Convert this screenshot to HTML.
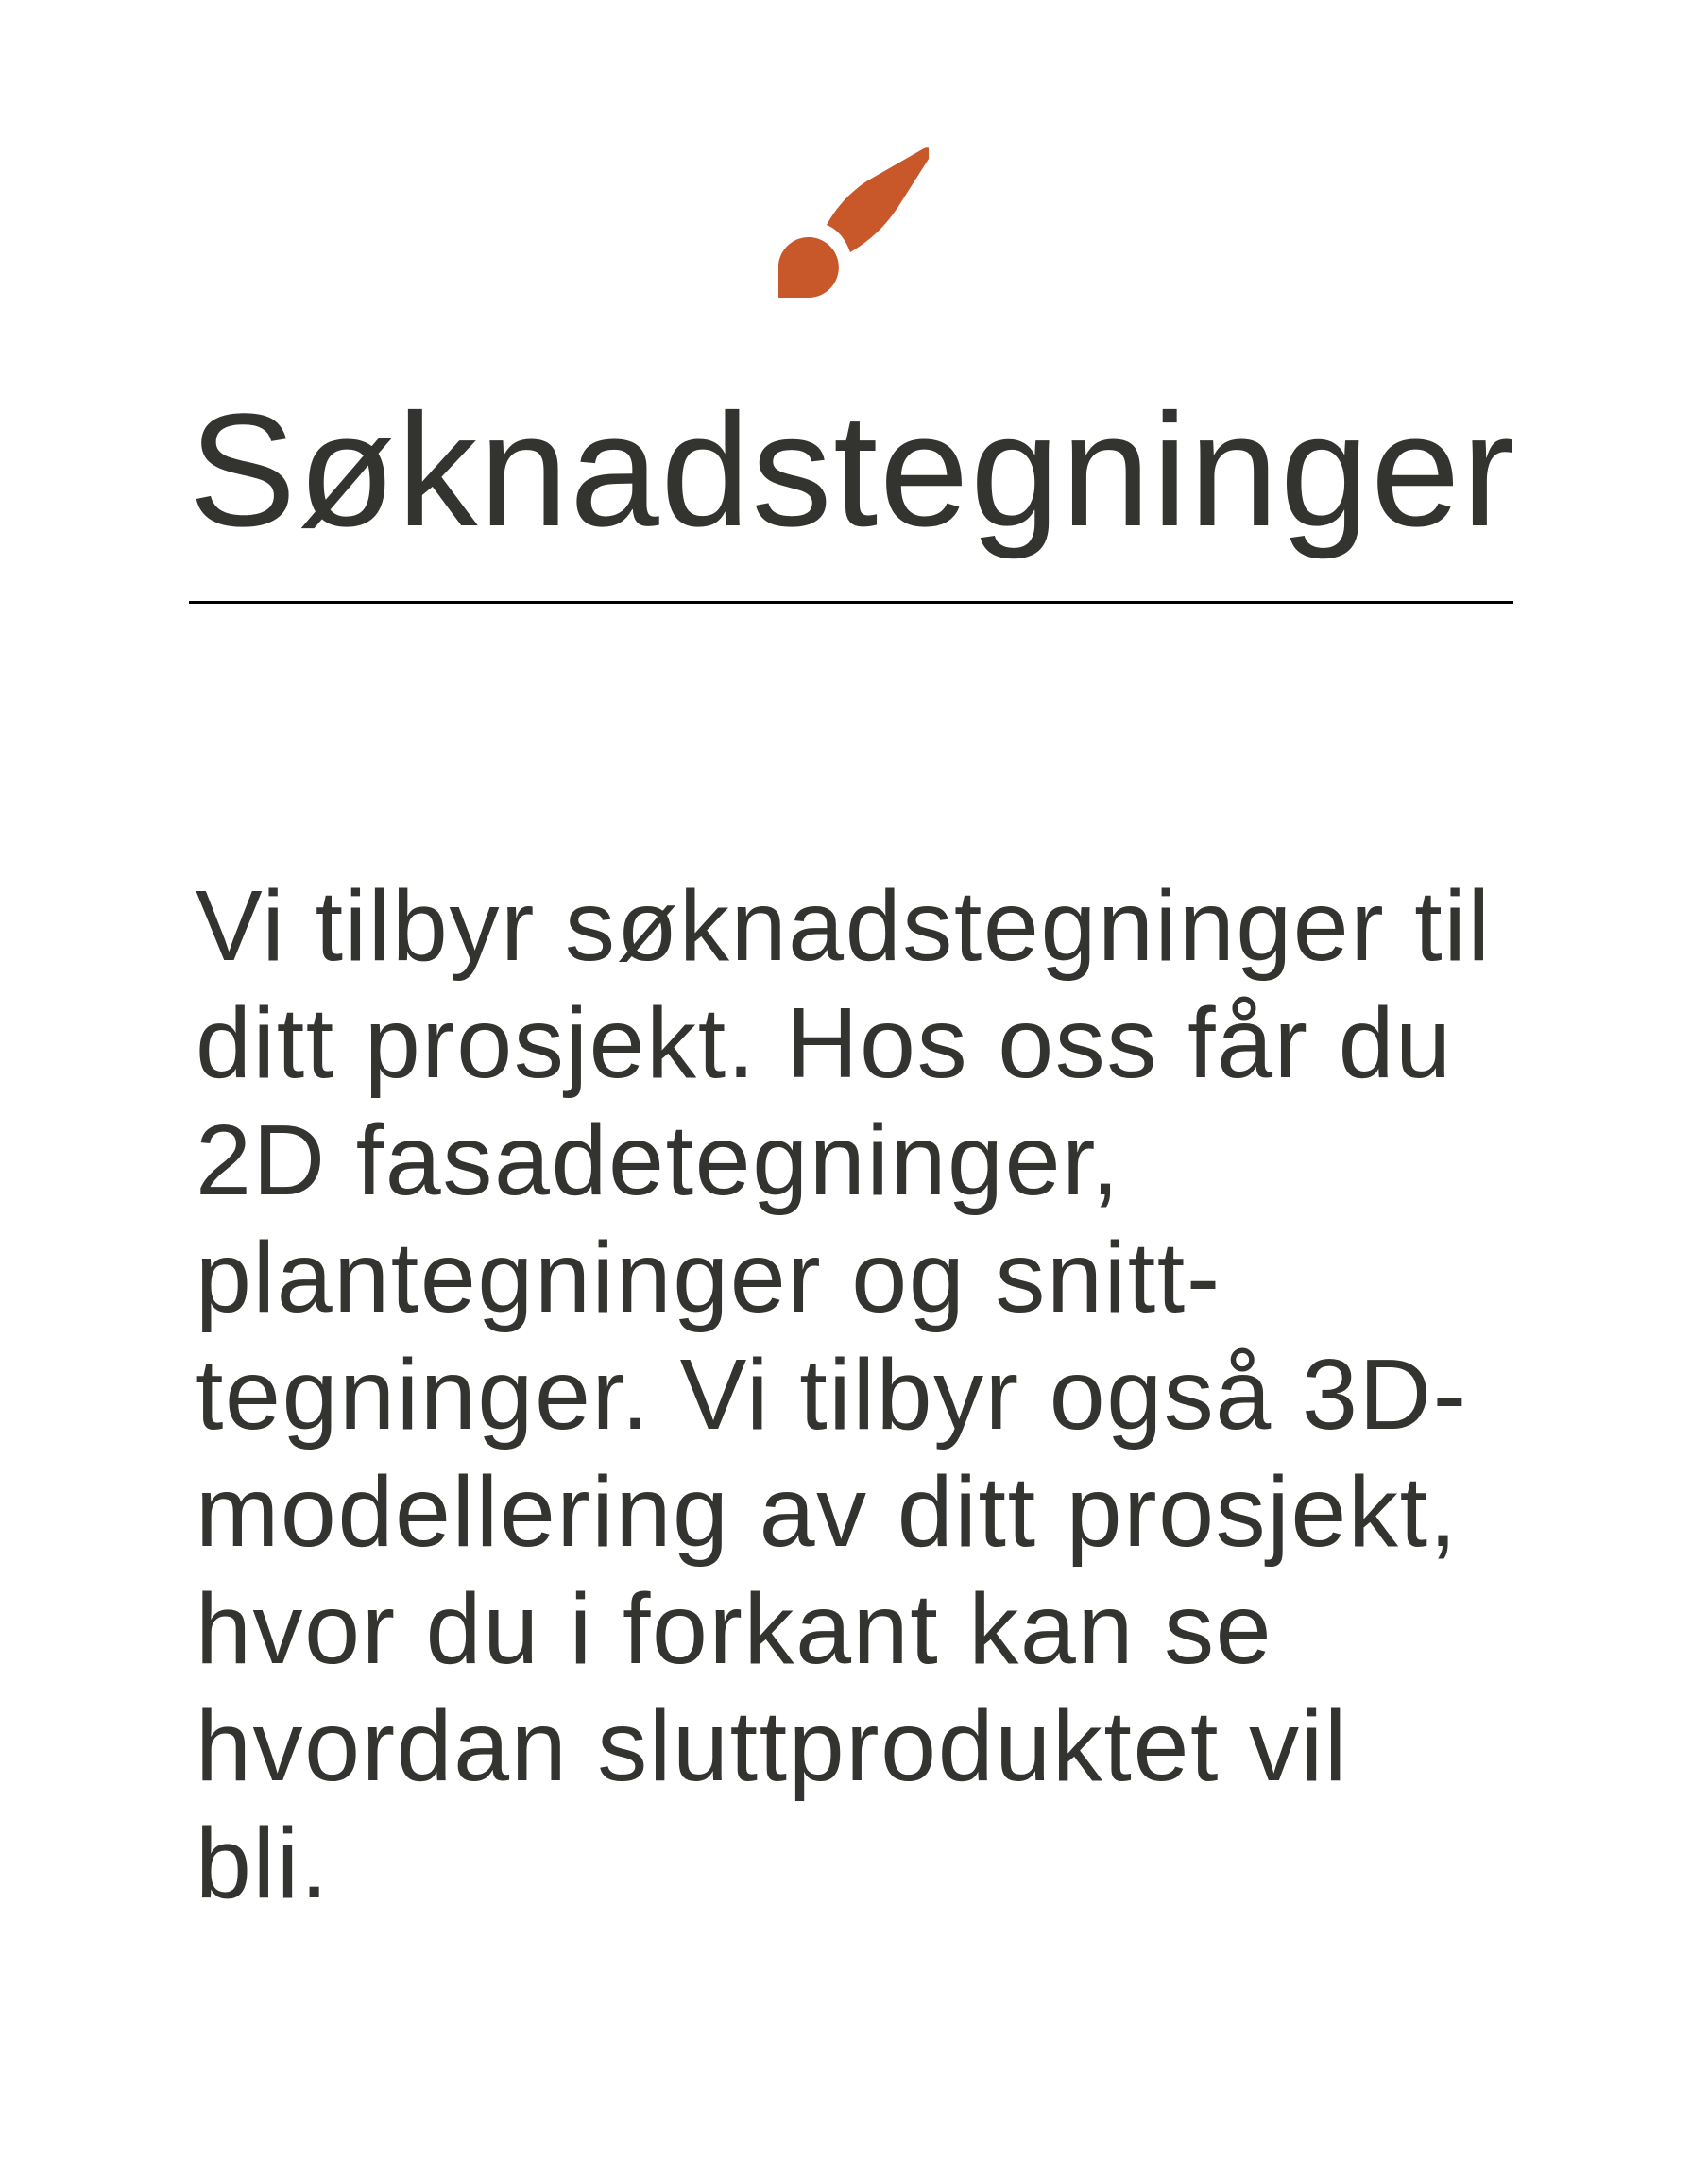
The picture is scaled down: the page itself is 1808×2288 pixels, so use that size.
<!DOCTYPE html>
<html><head><meta charset="utf-8"><style>
html,body{margin:0;padding:0;background:#fff;}
body{width:1808px;height:2288px;position:relative;overflow:hidden;font-family:"Liberation Sans",sans-serif;color:#333330;}
h1{position:absolute;left:200px;top:413px;margin:0;font-weight:400;font-size:170px;line-height:170px;white-space:nowrap;letter-spacing:1.6px;}
.rule{position:absolute;left:200px;top:636px;width:1402px;height:3px;background:#000;}
.p{position:absolute;left:207px;top:918px;font-size:106px;line-height:124px;white-space:nowrap;letter-spacing:1.6px;}
svg{position:absolute;left:823px;top:155px;}
</style></head><body>
<svg width="160" height="160" viewBox="43 25 160 160">
<path fill="#C8572A" d="M198 27 C204 24 209 30 205 35 L170 90 C155 112 140 125 120 137 C115 123 107 113 95 108 C105 90 118 75 137 62 Z"/>
<path fill="#C8572A" d="M44 185 V150 A32 32 0 1 1 76 185 Z"/>
</svg>
<h1>Søknadstegninger</h1>
<div class="rule"></div>
<div class="p">Vi tilbyr søknadstegninger til<br>ditt prosjekt. Hos oss får du<br>2D fasadetegninger,<br>plantegninger og snitt-<br>tegninger. Vi tilbyr også 3D-<br>modellering av ditt prosjekt,<br>hvor du i forkant kan se<br>hvordan sluttproduktet vil<br>bli.</div>
</body></html>
